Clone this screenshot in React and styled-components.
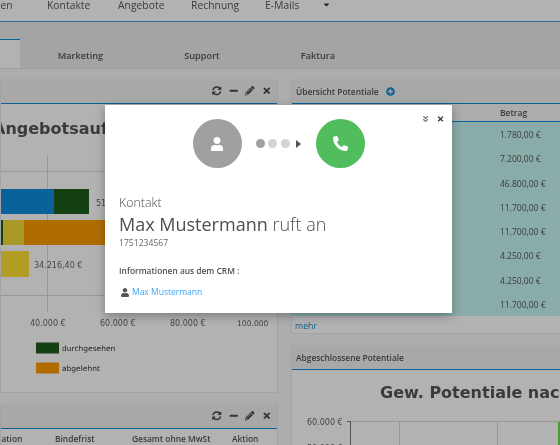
import React from 'react';
import styled, { createGlobalStyle } from 'styled-components';
import {
  FaSyncAlt, FaMinus, FaPencilAlt, FaTimes, FaUser, FaPhoneAlt,
  FaAngleDoubleDown, FaPlusCircle, FaCaretDown,
} from 'react-icons/fa';

const Global = createGlobalStyle`
  html, body { margin: 0; padding: 0; }
  body { font-family: "Open Sans", "Liberation Sans", sans-serif; }
`;

const Screen = styled.div`
  position: relative;
  width: 560px;
  height: 445px;
  overflow: hidden;
  background: #fff;
`;

const Page = styled.div`
  width: 560px;
  height: 445px;
  overflow: hidden;
  background: #f8f8f8;
  color: #555;
  filter: blur(0.6px);
`;

const NavBar = styled.div`
  display: flex;
  align-items: flex-end;
  height: 11px;
  padding-bottom: 10px;
  background: #fff;
  border-bottom: 1px solid #4d9fd6;
  font-size: 10.2px;
  line-height: 12px;
  letter-spacing: 0.1px;
`;

const NavItem = styled.span`
  flex: none;
  width: ${({ $width }) => $width}px;
  white-space: nowrap;
`;

const FirstNavItem = styled(NavItem)`
  margin-left: -62px;
  width: 109px;
`;

const NavCaret = styled(FaCaretDown)`
  width: 9px;
  height: 9px;
  margin-bottom: 2px;
  color: #333;
`;

const TabBar = styled.div`
  display: flex;
  height: 47px;
  align-items: flex-end;
  background: #ebebeb;
  border-bottom: 1px solid #e2e2e2;
  box-sizing: border-box;
`;

const Tab = styled.div`
  flex: none;
  box-sizing: border-box;
  width: ${({ $width }) => $width}px;
  height: 29px;
  padding-top: 9px;
  text-align: center;
  font-size: 9.2px;
  font-weight: 600;
  line-height: 14px;
  background: ${({ $active }) => ($active ? '#fff' : 'transparent')};
  border-top: 1px solid ${({ $active }) => ($active ? '#0e8fdd' : 'transparent')};
`;

const Columns = styled.div`
  display: grid;
  grid-template-columns: 278px 300px;
  column-gap: 13px;
  padding-top: 10px;
`;

const Column = styled.div`
  display: flex;
  flex-direction: column;
  gap: 11px;
  min-width: 0;
`;

const Panel = styled.section`
  box-sizing: border-box;
  background: #fff;
  border: solid #eaeaea;
  border-width: 0 1px 1px;
  height: ${({ $height }) => ($height ? `${$height}px` : 'auto')};
  overflow: hidden;
`;

const PanelHead = styled.header`
  display: flex;
  align-items: center;
  height: 24px;
  padding: 0 4px;
  background: #f1f1f1;
  border-bottom: 1px solid #0e8fdd;
  font-size: 8.4px;
  font-weight: 600;
`;

const PlusIcon = styled(FaPlusCircle)`
  width: 9px;
  height: 9px;
  margin-left: 7px;
  color: #0e8fdd;
`;

const Tools = styled.div`
  display: flex;
  align-items: center;
  margin-left: auto;
  margin-right: 2px;
  gap: 7px;
  color: #4a4a4a;
  svg { width: 9.5px; height: 9.5px; }
`;

const ChartSvg = styled.svg`
  display: block;
`;

const OrderHead = styled.div`
  display: flex;
  height: 18px;
  align-items: center;
  font-size: 8.4px;
  font-weight: 600;
  white-space: nowrap;
`;

const OrderCell = styled.span`
  flex: none;
  width: ${({ $width }) => $width}px;
`;

const OrderFirst = styled(OrderCell)`
  margin-left: -31px;
`;

const AmountHead = styled.div`
  height: 17px;
  padding-left: 208px;
  background: #f6f6f6;
  border-bottom: 1px solid #0e8fdd;
  font-size: 8.5px;
  font-weight: 600;
  line-height: 18px;
`;

const AmountRow = styled.div`
  height: 24.25px;
  padding-left: 208px;
  background: #c5f7f2;
  font-size: 8.5px;
  line-height: 26px;
`;

const More = styled.a`
  display: block;
  height: 17px;
  padding-left: 3px;
  color: #1a86c8;
  font-size: 8.8px;
  line-height: 20px;
`;

const Backdrop = styled.div`
  position: absolute;
  inset: 0;
  background: rgba(0, 0, 0, 0.3);
`;

const Modal = styled.div`
  position: absolute;
  left: 105px;
  top: 105px;
  box-sizing: border-box;
  width: 347px;
  height: 208px;
  padding: 14px 14px 0;
  background: #fff;
  box-shadow: 0 3px 9px rgba(0, 0, 0, 0.3);
  color: #4f4f4f;
  filter: blur(0.35px);
`;

const ModalTools = styled.div`
  position: absolute;
  top: 10px;
  right: 8px;
  display: flex;
  align-items: center;
  gap: 8px;
`;

const DoubleDown = styled(FaAngleDoubleDown)`
  width: 7px;
  height: 8px;
  color: #777;
`;

const CloseIcon = styled(FaTimes)`
  width: 7px;
  height: 8px;
  color: #444;
`;

const CallFlow = styled.div`
  display: flex;
  align-items: center;
  padding-left: 73.5px;
`;

const Circle = styled.div`
  display: flex;
  align-items: center;
  justify-content: center;
  width: 49px;
  height: 49px;
  border-radius: 50%;
  background: ${({ $color }) => $color};
  color: #fff;
`;

const Dots = styled.div`
  display: flex;
  align-items: center;
  gap: 3.5px;
  margin: 0 15px 0 14px;
`;

const Dot = styled.span`
  width: 9px;
  height: 9px;
  border-radius: 50%;
  background: ${({ $on }) => ($on ? '#a0a0a0' : '#d4d4d4')};
`;

const Arrow = styled.span`
  width: 0;
  height: 0;
  margin-left: 3px;
  border-style: solid;
  border-width: 4.5px 0 4.5px 5px;
  border-color: transparent transparent transparent #555;
`;

const Kicker = styled.div`
  margin-top: 26px;
  font-size: 12.4px;
  font-weight: 300;
  line-height: 18px;
`;

const Title = styled.h2`
  margin: -1px 0 0;
  font-size: 18px;
  font-weight: 400;
  line-height: 26px;
`;

const TitleLight = styled.span`
  font-weight: 300;
`;

const Phone = styled.div`
  margin-top: -1px;
  font-size: 8.6px;
  line-height: 14px;
  color: #666;
`;

const InfoLabel = styled.div`
  margin-top: 14px;
  font-size: 8.4px;
  font-weight: 600;
  line-height: 14px;
`;

const ContactLink = styled.div`
  display: flex;
  align-items: center;
  gap: 3px;
  margin-top: 7px;
  padding-left: 2px;
  font-size: 8.5px;
  line-height: 14px;
  color: #42a5f5;
  svg { width: 8px; height: 9px; color: #555; }
`;

const PanelTools = () => (
  <Tools>
    <FaSyncAlt />
    <FaMinus />
    <FaPencilAlt />
    <FaTimes />
  </Tools>
);

const amounts = ['1.780,00 €', '7.200,00 €', '46.800,00 €', '11.700,00 €', '11.700,00 €', '4.250,00 €', '4.250,00 €', '11.700,00 €'];

const AXIS_FONT = '"DejaVu Sans", sans-serif';

const OfferChart = () => (
  <ChartSvg width="276" height="289" viewBox="1 104 276 289">
    <g stroke="#d8d8d8" fill="none">
      <path d="M0 171.5H278M0 295.5H278M0 233.5H278" />
      <path d="M47.5 155V312M118.5 155V312M187.5 155V312M257.5 155V312" />
    </g>
    <text x="-7" y="134" fontFamily={AXIS_FONT} fontWeight="700" fontSize="16" fill="#555">Angebotsauftr</text>
    <rect x="0" y="189" width="54" height="25" fill="#0e8fdd" />
    <rect x="54" y="189" width="35" height="25" fill="#1c5d1c" />
    <text x="96" y="206" fontFamily={AXIS_FONT} fontSize="8" fill="#666">51</text>
    <rect x="0" y="220" width="3" height="25" fill="#1c5d1c" />
    <rect x="3" y="220" width="21" height="25" fill="#f2d83a" />
    <rect x="24" y="220" width="254" height="25" fill="#fb9d00" />
    <rect x="0" y="251" width="29" height="26" fill="#ffe339" />
    <text x="34" y="268" fontFamily={AXIS_FONT} fontSize="8" fill="#666">34.216,40 €</text>
    <g fontFamily={AXIS_FONT} fontSize="8" fill="#666">
      <text x="30" y="326">40.000 €</text>
      <text x="100" y="326">60.000 €</text>
      <text x="170" y="326">80.000 €</text>
      <text x="237" y="326" fontSize="7.6">100.000</text>
    </g>
    <rect x="36" y="342.5" width="23" height="11" fill="#1c5d1c" />
    <text x="62" y="351" fontFamily={AXIS_FONT} fontSize="7.5" fill="#333">durchgesehen</text>
    <rect x="36" y="362.5" width="23" height="11" fill="#fb9d00" />
    <text x="62" y="371" fontFamily={AXIS_FONT} fontSize="7.5" fill="#333">abgelehnt</text>
  </ChartSvg>
);

const WonChart = () => (
  <ChartSvg width="270" height="77" viewBox="292 369 270 77">
    <text x="380" y="397" fontFamily={AXIS_FONT} fontWeight="700" fontSize="16" fill="#555">Gew. Potentiale nach</text>
    <g stroke="#d8d8d8" fill="none">
      <path d="M350 420.5H560M399.5 420V446M497.5 420V446" />
    </g>
    <path d="M350.5 420V446M347 420.5H351" stroke="#777" fill="none" />
    <rect x="558" y="421" width="3" height="25" fill="#6fdc4a" />
    <g fontFamily={AXIS_FONT} fontSize="8" fill="#666">
      <text x="307" y="424">60.000 €</text>
      <text x="307" y="449.5">50.000 €</text>
    </g>
  </ChartSvg>
);

export default function App() {
  return (
    <Screen>
      <Global />
      <Page>
        <NavBar>
          <FirstNavItem>Organisationen</FirstNavItem>
          <NavItem $width={71}>Kontakte</NavItem>
          <NavItem $width={73}>Angebote</NavItem>
          <NavItem $width={74}>Rechnung</NavItem>
          <NavItem $width={57}>E-Mails</NavItem>
          <NavCaret />
        </NavBar>
        <TabBar>
          <Tab $active $width={20} />
          <Tab $width={121}>Marketing</Tab>
          <Tab $width={122}>Support</Tab>
          <Tab $width={110}>Faktura</Tab>
        </TabBar>
        <Columns>
          <Column>
            <Panel $height={314}>
              <PanelHead><PanelTools /></PanelHead>
              <OfferChart />
            </Panel>
            <Panel>
              <PanelHead><PanelTools /></PanelHead>
              <OrderHead>
                <OrderFirst $width={85}>Organisation</OrderFirst>
                <OrderCell $width={77}>Bindefrist</OrderCell>
                <OrderCell $width={100}>Gesamt ohne MwSt</OrderCell>
                <OrderCell $width={30}>Aktion</OrderCell>
              </OrderHead>
            </Panel>
          </Column>
          <Column>
            <Panel>
              <PanelHead>Übersicht Potentiale<PlusIcon /></PanelHead>
              <AmountHead>Betrag</AmountHead>
              {amounts.map((amount, i) => <AmountRow key={i}>{amount}</AmountRow>)}
              <More>mehr</More>
            </Panel>
            <Panel>
              <PanelHead>Abgeschlossene Potentiale</PanelHead>
              <WonChart />
            </Panel>
          </Column>
        </Columns>
      </Page>
      <Backdrop />
      <Modal>
        <ModalTools>
          <DoubleDown />
          <CloseIcon />
        </ModalTools>
        <CallFlow>
          <Circle $color="#a0a0a0"><FaUser size={14} /></Circle>
          <Dots>
            <Dot $on />
            <Dot />
            <Dot />
            <Arrow />
          </Dots>
          <Circle $color="#52bd5c"><FaPhoneAlt size={15} /></Circle>
        </CallFlow>
        <Kicker>Kontakt</Kicker>
        <Title>Max Mustermann <TitleLight>ruft an</TitleLight></Title>
        <Phone>1751234567</Phone>
        <InfoLabel>Informationen aus dem CRM :</InfoLabel>
        <ContactLink><FaUser />Max Mustermann</ContactLink>
      </Modal>
    </Screen>
  );
}
